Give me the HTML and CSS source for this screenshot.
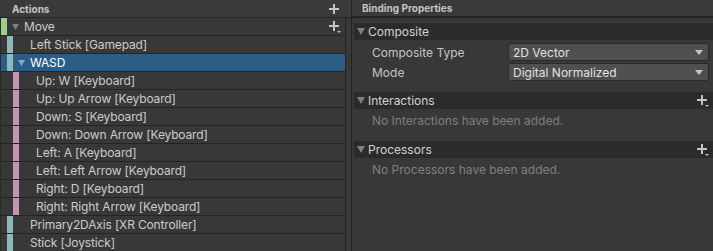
FILE: index.html
```html
<!DOCTYPE html>
<html lang="en">
<head>
    <meta charset="UTF-8">
    <title>Input Actions</title>
    <link rel="stylesheet" href="styles.css">
</head>
<body>
    <div class="editor">
        <section class="actions-pane">
            <div class="pane-header">
                <span class="pane-title">Actions</span>
                <svg class="icon-plus" width="10" height="10" viewBox="0 0 10 10"><rect x="4" y="0" width="2" height="10"/><rect x="0" y="4" width="10" height="2"/></svg>
            </div>
            <ul class="tree">
                <li class="row action depth-0">
                    <span class="bar"></span>
                    <span class="fold"><svg width="7" height="6" viewBox="0 0 7 6"><polygon points="0,0 7,0 3.5,6"/></svg></span>
                    <span class="label">Move</span>
                    <svg class="icon-plus-more" width="12" height="12" viewBox="0 0 12 12"><rect x="4" y="0" width="2" height="10"/><rect x="0" y="4" width="10" height="2"/><polygon points="8,10 12,10 10,12"/></svg>
                </li>
                <li class="row binding depth-1">
                    <span class="bar"></span><span class="fold"></span>
                    <span class="label">Left Stick [Gamepad]</span>
                </li>
                <li class="row binding depth-1 selected">
                    <span class="bar"></span>
                    <span class="fold"><svg width="7" height="6" viewBox="0 0 7 6"><polygon points="0,0 7,0 3.5,6"/></svg></span>
                    <span class="label">WASD</span>
                </li>
                <li class="row part depth-2"><span class="bar"></span><span class="fold"></span><span class="label">Up: W [Keyboard]</span></li>
                <li class="row part depth-2"><span class="bar"></span><span class="fold"></span><span class="label">Up: Up Arrow [Keyboard]</span></li>
                <li class="row part depth-2"><span class="bar"></span><span class="fold"></span><span class="label">Down: S [Keyboard]</span></li>
                <li class="row part depth-2"><span class="bar"></span><span class="fold"></span><span class="label">Down: Down Arrow [Keyboard]</span></li>
                <li class="row part depth-2"><span class="bar"></span><span class="fold"></span><span class="label">Left: A [Keyboard]</span></li>
                <li class="row part depth-2"><span class="bar"></span><span class="fold"></span><span class="label">Left: Left Arrow [Keyboard]</span></li>
                <li class="row part depth-2"><span class="bar"></span><span class="fold"></span><span class="label">Right: D [Keyboard]</span></li>
                <li class="row part depth-2"><span class="bar"></span><span class="fold"></span><span class="label">Right: Right Arrow [Keyboard]</span></li>
                <li class="row binding depth-1"><span class="bar"></span><span class="fold"></span><span class="label">Primary2DAxis [XR Controller]</span></li>
                <li class="row binding depth-1"><span class="bar"></span><span class="fold"></span><span class="label">Stick [Joystick]</span></li>
            </ul>
        </section>

        <section class="props-pane">
            <div class="pane-header props-header">
                <span class="pane-title">Binding Properties</span>
            </div>
            <div class="props-body">
                <div class="section">
                    <div class="section-head">
                        <span class="fold"><svg width="8" height="7" viewBox="0 0 8 7"><polygon points="0,0 8,0 4,7"/></svg></span>
                        <span class="section-title">Composite</span>
                    </div>
                    <div class="section-body">
                        <div class="field">
                            <span class="field-label">Composite Type</span>
                            <div class="dropdown">
                                <span>2D Vector</span>
                                <svg width="8" height="5" viewBox="0 0 8 5"><polygon points="0,0 8,0 4,5"/></svg>
                            </div>
                        </div>
                        <div class="field">
                            <span class="field-label">Mode</span>
                            <div class="dropdown">
                                <span>Digital Normalized</span>
                                <svg width="8" height="5" viewBox="0 0 8 5"><polygon points="0,0 8,0 4,5"/></svg>
                            </div>
                        </div>
                    </div>
                </div>
                <div class="section">
                    <div class="section-head">
                        <span class="fold"><svg width="8" height="7" viewBox="0 0 8 7"><polygon points="0,0 8,0 4,7"/></svg></span>
                        <span class="section-title">Interactions</span>
                        <svg class="icon-plus-more" width="12" height="12" viewBox="0 0 12 12"><rect x="4" y="0" width="2" height="10"/><rect x="0" y="4" width="10" height="2"/><polygon points="8,10 12,10 10,12"/></svg>
                    </div>
                    <div class="section-body">
                        <p class="empty">No Interactions have been added.</p>
                    </div>
                </div>
                <div class="section">
                    <div class="section-head">
                        <span class="fold"><svg width="8" height="7" viewBox="0 0 8 7"><polygon points="0,0 8,0 4,7"/></svg></span>
                        <span class="section-title">Processors</span>
                        <svg class="icon-plus-more" width="12" height="12" viewBox="0 0 12 12"><rect x="4" y="0" width="2" height="10"/><rect x="0" y="4" width="10" height="2"/><polygon points="8,10 12,10 10,12"/></svg>
                    </div>
                    <div class="section-body">
                        <p class="empty">No Processors have been added.</p>
                    </div>
                </div>
            </div>
        </section>
    </div>
</body>
</html>
```

FILE: styles.css
```css
* {
    margin: 0;
    padding: 0;
    box-sizing: border-box;
}
body {
    font-family: Inter, 'Noto Sans', sans-serif;
    font-size: 12px;
    background: #383838;
    color: #c4c4c4;
    width: 713px;
    height: 251px;
    overflow: hidden;
}
.editor {
    display: flex;
    height: 251px;
}
.actions-pane {
    width: 352px;
    flex-shrink: 0;
    border-right: 1px solid #232323;
}
.pane-header {
    height: 18px;
    background: #3a3a3a;
    border-bottom: 1px solid #232323;
    display: flex;
    align-items: center;
    justify-content: space-between;
    padding: 0 12px 0 12px;
}
.pane-title {
    font-size: 10px;
    font-weight: 700;
    color: #c4c4c4;
}
.icon-plus,
.icon-plus-more {
    fill: #c4c4c4;
    flex-shrink: 0;
}
.tree {
    list-style: none;
    width: 346px;
    border-left: 1px solid #2b2b2b;
    border-right: 1px solid #242424;
}
.row {
    height: 18px;
    display: flex;
    align-items: center;
    background: #383838;
    border-bottom: 1px solid #242424;
    color: #cbcbcb;
    letter-spacing: -0.15px;
}
.row.depth-1 {
    padding-left: 6px;
}
.row.depth-2 {
    padding-left: 12px;
}
.row .bar {
    width: 6px;
    align-self: stretch;
}
.action .bar {
    background: #9fce8b;
}
.binding .bar {
    background: #8bbabf;
}
.part .bar {
    background: #c693b3;
}
.fold {
    width: 7px;
    margin: 0 5px;
    display: flex;
    align-items: center;
    fill: #7f7f7f;
}
.row .label {
    flex: 1;
    white-space: nowrap;
}
.row .icon-plus-more {
    margin-right: 4px;
}
.row.selected {
    background: #2c5d87;
    color: #fff;
}
.row.selected .fold {
    fill: #8ea6bc;
}
.props-pane {
    flex: 1;
}
.props-header {
    border-bottom: 2px solid #232323;
    padding-left: 10px;
}
.props-body {
    padding: 5px 0 0 2px;
}
.section-head {
    height: 17px;
    background: #2b2b2b;
    display: flex;
    align-items: center;
    padding: 0 4px 0 3px;
}
.section-head .fold {
    width: 8px;
    margin: 0 3px 0 0;
}
.section-title {
    flex: 1;
    color: #d2d2d2;
}
.section-body {
    padding: 3px 4px 11px 18px;
}
.field {
    display: flex;
    align-items: center;
    height: 18px;
    margin-bottom: 2px;
}
.field:last-child {
    margin-bottom: 0;
}
.field-label {
    width: 136px;
    color: #c4c4c4;
}
.dropdown {
    flex: 1;
    height: 18px;
    display: flex;
    align-items: center;
    justify-content: space-between;
    padding: 0 5px 0 4px;
    background: #4f4f4f;
    border: 1px solid #2a2a2a;
    border-radius: 3px;
    color: #e0e0e0;
    fill: #c4c4c4;
}
.empty {
    height: 18px;
    line-height: 18px;
    color: #7f7f7f;
}
```
